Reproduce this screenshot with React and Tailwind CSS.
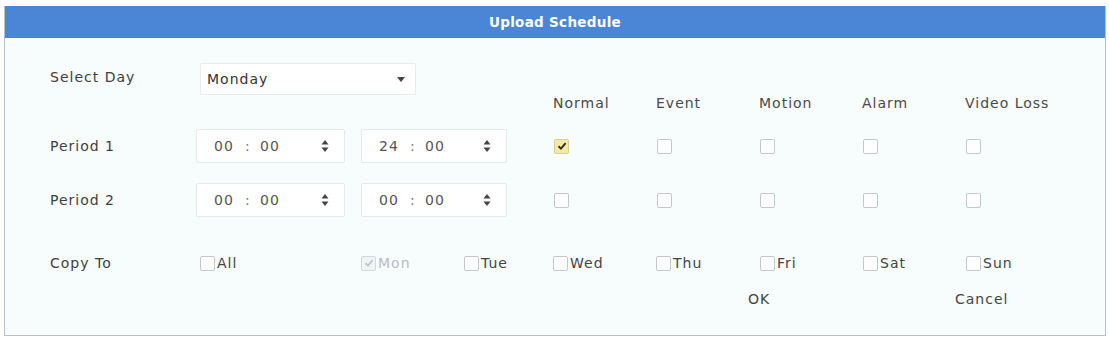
import { useState } from 'react';

const COLS = ['Normal', 'Event', 'Motion', 'Alarm', 'Video Loss'];
const DAYS = [
  { label: 'Mon', w: 'w-[103px]', disabled: true, checked: true },
  { label: 'Tue', w: 'w-[89px]' },
  { label: 'Wed', w: 'w-[103px]' },
  { label: 'Thu', w: 'w-[104px]' },
  { label: 'Fri', w: 'w-[103px]' },
  { label: 'Sat', w: 'w-[103px]' },
  { label: 'Sun', w: 'w-[103px]' },
];

function Box({ checked, disabled, onClick }) {
  return (
    <span
      onClick={onClick}
      className={
        'flex h-[15px] w-[15px] shrink-0 items-center justify-center rounded-[2px] border ' +
        (checked && !disabled
          ? 'border-[#d8cf8a] bg-[#f4eaa2]'
          : disabled
          ? 'border-[#d4d8da] bg-[#f1f3f4]'
          : 'border-[#c3c8cb] bg-white')
      }
    >
      {checked && (
        <svg width="10" height="10" viewBox="0 0 10 10">
          <path
            d="M1.5 5.2 L4 7.6 L8.6 2.2"
            fill="none"
            stroke={disabled ? '#c4c8ca' : '#2b2b2b'}
            strokeWidth="1.9"
          />
        </svg>
      )}
    </span>
  );
}

function Spinner() {
  return (
    <svg width="8" height="16" viewBox="0 0 8 16" className="shrink-0">
      <path d="M4 2 L7.5 6.5 L0.5 6.5 Z" fill="#444" />
      <path d="M4 14 L7.5 9.5 L0.5 9.5 Z" fill="#444" />
    </svg>
  );
}

function TimeBox({ h, m, w }) {
  return (
    <div
      className={
        'flex h-[34px] items-center rounded-[2px] border border-[#e3e9ec] bg-white pl-[17px] pr-[15px] text-[#555] ' +
        w
      }
    >
      <span className="w-[31px]">{h}</span>
      <span className="w-[15px] text-[#777]">:</span>
      <span>{m}</span>
      <span className="flex-1" />
      <Spinner />
    </div>
  );
}

export default function App() {
  const [normal1, setNormal1] = useState(true);

  return (
    <div
      className="h-[340px] w-[1109px] bg-white pl-[4px] pt-[6px] text-[14px] tracking-[1px] text-[#404040]"
      style={{ fontFamily: '"DejaVu Sans", Verdana, sans-serif' }}
    >
      <div className="flex h-[330px] w-[1102px] flex-col border border-t-0 border-[#b9c0c6] bg-[#f7fcfd]">
        {/* title bar */}
        <div className="flex h-[32px] items-center justify-center bg-[#4b86d6] text-[13.5px] font-bold tracking-[0.3px] text-white">
          Upload Schedule
        </div>

        <div className="flex flex-col pl-[45px]">
          {/* select day */}
          <div className="mt-[25px] flex items-center">
            <span className="w-[150px] -mt-[4px]">Select Day</span>
            <div className="flex h-[32px] w-[216px] items-center justify-between rounded-[2px] border border-[#e6ecee] bg-white pl-[6px] pr-[10px] text-[#333]">
              <span>Monday</span>
              <svg width="8" height="5" viewBox="0 0 8 5">
                <path d="M0 0 L8 0 L4 5 Z" fill="#444" />
              </svg>
            </div>
          </div>

          {/* headers */}
          <div className="flex h-[17px] items-center text-[#4a4a4a]">
            <span className="w-[503px]" />
            {COLS.map((c) => (
              <span key={c} className="w-[103px]">
                {c}
              </span>
            ))}
          </div>

          {/* periods */}
          {[
            { label: 'Period 1', a: ['00', '00'], b: ['24', '00'], mt: 'mt-[17px]' },
            { label: 'Period 2', a: ['00', '00'], b: ['00', '00'], mt: 'mt-[20px]' },
          ].map((p, i) => (
            <div key={p.label} className={'flex items-center ' + p.mt}>
              <span className="w-[146px]">{p.label}</span>
              <TimeBox h={p.a[0]} m={p.a[1]} w="w-[149px]" />
              <span className="w-[16px]" />
              <TimeBox h={p.b[0]} m={p.b[1]} w="w-[146px]" />
              <span className="w-[46px]" />
              {COLS.map((c, j) => (
                <span key={c} className="flex w-[103px] pl-[1px]">
                  <Box
                    checked={i === 0 && j === 0 && normal1}
                    onClick={i === 0 && j === 0 ? () => setNormal1(!normal1) : undefined}
                  />
                </span>
              ))}
            </div>
          ))}

          {/* copy to */}
          <div className="mt-[36px] flex h-[20px] items-center">
            <span className="w-[150px]">Copy To</span>
            <span className="flex w-[161px] items-center gap-[2px] text-[#444]">
              <Box />
              All
            </span>
            {DAYS.map((d) => (
              <span
                key={d.label}
                className={
                  'flex items-center gap-[2px] ' +
                  d.w +
                  (d.disabled ? ' text-[#b8bcbf]' : ' text-[#444]')
                }
              >
                <Box checked={d.checked} disabled={d.disabled} />
                {d.label}
              </span>
            ))}
          </div>

          {/* buttons */}
          <div className="mt-[16px] flex h-[20px] items-center text-[#444]">
            <span className="w-[698px]" />
            <span className="w-[207px]">OK</span>
            <span>Cancel</span>
          </div>
        </div>
      </div>
    </div>
  );
}
